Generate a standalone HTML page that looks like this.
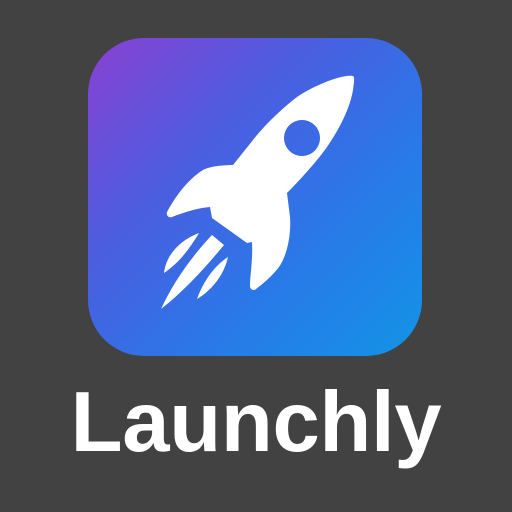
<!DOCTYPE html>
<html><head><style>
html,body{margin:0;padding:0;background:#424242;width:512px;height:512px;overflow:hidden}
.icon{position:absolute;left:88px;top:38px;width:334px;height:318px;border-radius:56px;background:linear-gradient(135deg,#8a40d2 0%,#4a5ee0 35%,#2a78e8 65%,#1294e6 100%)}
.t{position:absolute;left:0;width:512px;text-align:center;top:373px;font:bold 85px/100px "Liberation Sans",sans-serif;color:#fff;letter-spacing:-0.3px;padding-left:0}
</style></head><body>
<div class="icon"></div>
<svg width="512" height="512" style="position:absolute;left:0;top:0">
<path fill="#fff" fill-rule="evenodd" d="M353 76 C340 74 310 88 297 97 C280 110 262 128 253 140 L233 165 C225 165 212 166 205 169 C195 174 180 188 167 212 C166 216 169 218 172 217 C185 212 198 208 210 207 L212 218 L247 243 L252 242 C253 260 250 275 250 286 C250 290 254 291 256 289 C268 280 278 270 282 262 C289 248 291 230 290 217 L287 193 C300 180 318 160 327 147 C340 128 350 108 353 90 C354 82 355 77 353 76 Z M302 120 A18 18 0 1 0 302.01 120 Z"/>
<path fill="#fff" d="M164 273 C166 255 180 240 199 233 C190 248 180 262 164 273 Z"/>
<path fill="#fff" d="M161 309 C172 285 190 258 212 235 L224 245 C205 268 185 290 161 309 Z"/>
<path fill="#fff" d="M197 299 C203 282 214 266 228 257 C224 275 212 290 197 299 Z"/>
</svg>
<div class="t">Launchly</div>
</body></html>
